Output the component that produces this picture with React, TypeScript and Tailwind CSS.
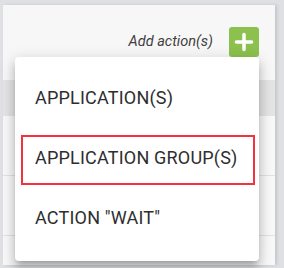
import { Plus } from "lucide-react";

const items = ["APPLICATION(S)", "APPLICATION GROUP(S)", 'ACTION "WAIT"'];

export default function App() {
  return (
    <div
      className="relative w-[284px] h-[268px] overflow-hidden bg-[#dfe0e3] pt-[5px] pl-[3px]"
      style={{ fontFamily: "Roboto, 'Liberation Sans', sans-serif" }}
    >
      <div className="w-[272px] h-[260px] bg-[#f7f7f7] flex flex-col shadow-[2px_0_3px_rgba(0,0,0,0.12)]">
        <div className="h-[75px] flex items-start justify-end pt-[22px] pr-[16px] gap-[16px]">
          <span className="h-[30px] flex items-center italic text-[14.5px] text-[#404040]">
            Add action(s)
          </span>
          <button className="w-[30px] h-[30px] rounded-[3px] bg-[#8cc04f] flex items-center justify-center">
            <Plus size={26} strokeWidth={3.5} color="#ffffff" absoluteStrokeWidth />
          </button>
        </div>
        <div className="h-[36px] bg-[#e4e4e4]" />
        <div className="h-[60px] border-b border-[#e2e2e2] bg-[#f8f8f8]" />
        <div className="h-[60px] border-b border-[#e2e2e2] bg-[#f8f8f8]" />
        <div className="flex-1 bg-[#f8f8f8]" />
      </div>

      <div className="absolute left-[15px] top-[57px] w-[244px] h-[204px] bg-white rounded-[4px] pt-[10px] shadow-[0_5px_5px_-3px_rgba(0,0,0,0.2),0_8px_10px_1px_rgba(0,0,0,0.14),0_3px_14px_2px_rgba(0,0,0,0.12)]">
        {items.map((label) => (
          <div
            key={label}
            className="h-[60px] flex items-center pl-[20px] text-[18px] tracking-[0.2px] text-[#2e2e2e]"
          >
            {label}
          </div>
        ))}
        <div className="absolute left-[6px] top-[78px] w-[234px] h-[50px] border-2 border-[#f2333f]" />
      </div>
    </div>
  );
}
